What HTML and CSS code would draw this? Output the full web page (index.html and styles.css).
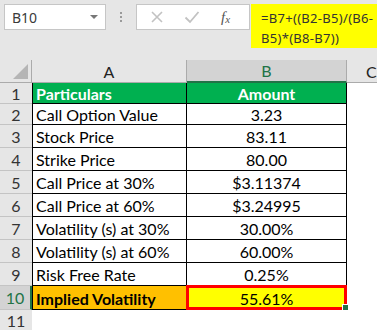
FILE: index.html
```html
<!DOCTYPE html>
<html>
<head>
<meta charset="utf-8">
<link rel="stylesheet" href="styles.css">
</head>
<body>
<div class="topbar">
  <div class="namebox"><span class="nb-text">B10</span><span class="nb-arrow"></span></div>
  <div class="dots"><i></i><i></i><i></i></div>
  <div class="fbtns">
    <svg class="ico-x" width="14" height="14" viewBox="0 0 14 14"><path d="M2 2 L12 12 M12 2 L2 12" stroke="#c2c2c2" stroke-width="1.6" fill="none"/></svg>
    <svg class="ico-ok" width="16" height="14" viewBox="0 0 16 14"><path d="M1.5 7.5 L6 12 L14.5 2" stroke="#c2c2c2" stroke-width="1.8" fill="none"/></svg>
    <span class="fx">f<sub>x</sub></span>
  </div>
  <div class="formula">=B7+((B2-B5)/(B6-<br>B5)*(B8-B7))</div>
</div>
<div class="sheet">
  <div class="corner"><span class="tri"></span></div>
  <div class="colhdr">A</div>
  <div class="colhdr sel">B</div>
  <div class="colhdr c">C</div>

  <div class="rh r1">1</div><div class="cell a hd r1">Particulars</div><div class="cell b hd r1">Amount</div><div class="empty r1"></div>
  <div class="rh r2">2</div><div class="cell a r2">Call Option Value</div><div class="cell b r2">3.23</div><div class="empty r2"></div>
  <div class="rh">3</div><div class="cell a">Stock Price</div><div class="cell b">83.11</div><div class="empty"></div>
  <div class="rh">4</div><div class="cell a">Strike Price</div><div class="cell b">80.00</div><div class="empty"></div>
  <div class="rh">5</div><div class="cell a">Call Price at 30%</div><div class="cell b">$3.11374</div><div class="empty"></div>
  <div class="rh">6</div><div class="cell a">Call Price at 60%</div><div class="cell b">$3.24995</div><div class="empty"></div>
  <div class="rh">7</div><div class="cell a">Volatility (s) at 30%</div><div class="cell b">30.00%</div><div class="empty"></div>
  <div class="rh">8</div><div class="cell a">Volatility (s) at 60%</div><div class="cell b">60.00%</div><div class="empty"></div>
  <div class="rh">9</div><div class="cell a">Risk Free Rate</div><div class="cell b">0.25%</div><div class="empty"></div>
  <div class="rh selr r10">10</div><div class="cell a iv r10">Implied Volatility</div><div class="cell b res r10">55.61%</div><div class="empty r10"></div>
  <div class="rh r11">11</div><div class="blank r11"></div><div class="blank r11"></div><div class="empty r11"></div>
</div>
</body>
</html>
```

FILE: styles.css
```css
* { box-sizing: border-box; }
html, body { margin: 0; padding: 0; }
body {
  width: 377px;
  height: 330px;
  overflow: hidden;
  background: #ffffff;
  font-family: Lato, "Liberation Sans", sans-serif;
}
.topbar {
  height: 60px;
  background: #e6e6e6;
  display: flex;
  align-items: flex-start;
  padding: 4px 0 0 4px;
}
.namebox {
  width: 102px;
  height: 26px;
  background: #fff;
  border: 1px solid #c6c6c6;
  display: flex;
  align-items: center;
  justify-content: space-between;
  padding: 0 7px 0 7px;
}
.nb-text {
  font-family: "Noto Sans", "Open Sans", sans-serif;
  font-size: 14px;
  color: #3a3a3a;
}
.nb-arrow {
  width: 0; height: 0;
  border-left: 4px solid transparent;
  border-right: 4px solid transparent;
  border-top: 4px solid #777;
}
.dots {
  width: 30px;
  height: 26px;
  display: flex;
  flex-direction: column;
  align-items: center;
  justify-content: center;
  gap: 2px;
}
.dots i {
  display: block;
  width: 2px;
  height: 2px;
  background: #9a9a9a;
}
.fbtns {
  width: 114px;
  height: 26px;
  background: #fff;
  border: 1px solid #c6c6c6;
  display: flex;
  align-items: center;
  padding-left: 13px;
}
.ico-x { margin-right: 20px; }
.ico-ok { margin-right: 21px; }
.fx {
  font-family: "Liberation Serif", serif;
  font-style: italic;
  font-size: 15px;
  color: #555;
  line-height: 1;
}
.fx sub { font-size: 11px; vertical-align: -1px; }
.formula {
  width: 126px;
  height: 44px;
  background: #ffff00;
  margin-left: 1px;
  font-family: "Noto Sans", "Open Sans", sans-serif;
  font-size: 13px;
  letter-spacing: 0.3px;
  line-height: 20px;
  color: #333;
  padding: 4px 0 0 10px;
  white-space: nowrap;
}
.sheet {
  display: grid;
  grid-template-columns: 32px 155px 160px 1fr;
  grid-template-rows: 23px 21px 21px repeat(7, 23px) 24px 1fr;
  height: 270px;
  font-size: 16px;
  color: #000;
}
.corner {
  background: #e6e6e6;
  border-bottom: 1px solid #ababab;
  border-right: 1px solid #ababab;
  position: relative;
}
.tri {
  position: absolute;
  right: 3px;
  bottom: 3px;
  width: 0; height: 0;
  border-left: 15px solid transparent;
  border-bottom: 15px solid #b5b5b5;
}
.colhdr {
  background: #e6e6e6;
  border-bottom: 1px solid #ababab;
  border-right: 1px solid #ababab;
  display: flex;
  align-items: center;
  justify-content: center;
  color: #222;
  font-size: 16px;
}
.colhdr.sel {
  background: #d3d3d3;
  color: #217346;
  border-bottom: 2px solid #217346;
}
.colhdr.c {
  justify-content: flex-start;
  padding-left: 19px;
  border-right: none;
}
.rh {
  background: #e6e6e6;
  border-bottom: 1px solid #c4c4c4;
  display: flex;
  align-items: center;
  justify-content: center;
  color: #333;
  font-size: 16px;
}
.rh.selr {
  background: #d3d3d3;
  color: #217346;
  border-right: 2px solid #217346;
}
.rh.r11 { border-bottom: none; }
.cell {
  border-bottom: 1px solid #000;
  border-right: 1px solid #000;
  display: flex;
  align-items: center;
  padding-top: 1px;
}
.cell.a {
  border-left: 1px solid #000;
  padding-left: 3px;
}
.cell.b { justify-content: center; }
.cell.hd {
  background: #00b050;
  color: #fff;
  font-weight: bold;
}
.cell.iv {
  background: #ffc000;
  font-weight: bold;
}
.cell.res {
  background: #ffff00;
  border: 3px solid #ff0000;
  margin-left: -1px;
  margin-top: -1px;
  position: relative;
}
.cell.res::after {
  content: "";
  position: absolute;
  right: -5px;
  bottom: -4px;
  width: 5px;
  height: 5px;
  background: #217346;
  border: 1px solid #fff;
}
.empty, .blank { background: #fff; }
```
